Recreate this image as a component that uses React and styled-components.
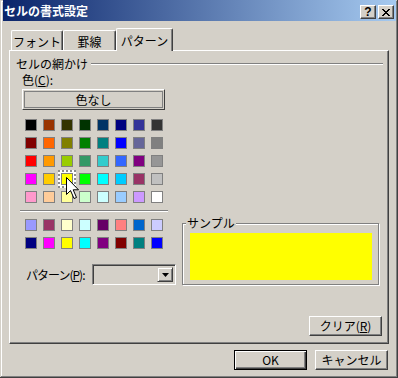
import React from "react";
import styled, { createGlobalStyle } from "styled-components";

const Global = createGlobalStyle`
  html, body { margin: 0; padding: 0; background: #d4d0c8; }
  body {
    font-family: "Noto Sans CJK JP", "Noto Sans", sans-serif;
    font-size: 12px;
    line-height: 14px;
    color: #000;
  }
  * { box-sizing: border-box; }
`;

const Window = styled.div`
  width: 398px;
  height: 378px;
  background: #d4d0c8;
  padding: 0 2px 2px 3px;
  box-shadow: inset -1px -1px #404040, inset 1px 1px #d4d0c8,
    inset -2px -2px #808080, inset 2px 2px #fff;
  display: flex;
  flex-direction: column;
`;

const TitleBar = styled.div`
  height: 21px;
  flex: none;
  display: flex;
  align-items: center;
  padding: 0 2px 0 1px;
  background: linear-gradient(to right, #0a246a, #a6caf0);
`;

const Title = styled.span`
  flex: 1;
  color: #fff;
  font-weight: bold;
  font-size: 12px;
  line-height: 14px;
  margin-top: 1px;
`;

const CaptionButton = styled.div`
  width: 16px;
  height: 14px;
  margin-top: 3px;
  margin-left: ${(p) => p.$gap || 0}px;
  background: #d4d0c8;
  border-top: 1px solid #fff;
  border-left: 1px solid #fff;
  border-right: 1px solid #404040;
  border-bottom: 1px solid #404040;
  box-shadow: inset -1px -1px #808080;
  display: flex;
  align-items: center;
  justify-content: center;
  font-family: "Liberation Sans", sans-serif;
  font-weight: bold;
  font-size: 12px;
  line-height: 12px;
`;

const Body = styled.div`
  flex: 1;
  display: flex;
  flex-direction: column;
  padding: 7px 7px 0 6px;
`;

const TabRow = styled.div`
  height: 22px;
  display: flex;
  align-items: flex-end;
  padding-left: 2px;
  position: relative;
  z-index: 1;
`;

const Tab = styled.div`
  width: ${(p) => p.$w}px;
  height: ${(p) => (p.$active ? 23 : 20)}px;
  margin-bottom: ${(p) => (p.$active ? -1 : 0)}px;
  background: #d4d0c8;
  border-top: 1px solid #fff;
  border-left: 1px solid #fff;
  border-right: 1px solid #404040;
  box-shadow: inset -1px 0 #808080;
  border-top-left-radius: 2px;
  border-top-right-radius: 2px;
  display: flex;
  align-items: center;
  justify-content: center;
  padding-top: ${(p) => (p.$active ? 1 : 2)}px;
`;

const Panel = styled.div`
  height: 294px;
  flex: none;
  border-top: 1px solid #fff;
  border-left: 1px solid #fff;
  border-right: 1px solid #404040;
  border-bottom: 1px solid #404040;
  box-shadow: inset -1px -1px #808080;
  display: flex;
  flex-direction: column;
  padding: 6px 5px 0 0;
`;

const GroupHeader = styled.div`
  display: flex;
  align-items: center;
  height: 14px;
  margin-left: 6px;
`;

const Rule = styled.div`
  flex: 1;
  height: 2px;
  margin-left: 3px;
  border-top: 1px solid #808080;
  border-bottom: 1px solid #fff;
`;

const Content = styled.div`
  display: flex;
`;

const LeftCol = styled.div`
  width: 172px;
  flex: none;
  display: flex;
  flex-direction: column;
`;

const RightCol = styled.div`
  flex: 1;
  display: flex;
  flex-direction: column;
  justify-content: flex-end;
`;

const FieldLabel = styled.div`
  margin: ${(p) => p.$mt || 0}px 0 0 ${(p) => p.$ml || 0}px;
  height: 14px;
`;

const NoneButton = styled.div`
  width: 143px;
  height: 21px;
  margin: 2px 0 0 12px;
  border-top: 1px solid #fff;
  border-left: 1px solid #fff;
  border-right: 1px solid #404040;
  border-bottom: 1px solid #404040;
  padding: 1px;
  display: flex;
`;

const NoneInner = styled.div`
  flex: 1;
  border: 1px solid #808080;
  display: flex;
  align-items: center;
  justify-content: center;
`;

const Palette = styled.div`
  position: relative;
  display: grid;
  grid-template-columns: repeat(8, 12px);
  grid-auto-rows: 12px;
  gap: 6px;
  margin: ${(p) => p.$mt}px 0 0 15px;
`;

const Swatch = styled.div`
  width: 12px;
  height: 12px;
  border: 1px solid #808080;
  background: ${(p) => p.$c};
  ${(p) =>
    p.$selected &&
    `box-shadow: 0 0 0 3px #fff; outline: 2px dotted #8c8c8c; outline-offset: 1px;`}
`;

const Cursor = styled.svg`
  position: absolute;
  left: 41px;
  top: 58px;
  width: 14px;
  height: 23px;
  overflow: visible;
`;

const Separator = styled.div`
  width: 148px;
  height: 2px;
  margin: 7px 0 0 10px;
  border-top: 1px solid #808080;
  border-bottom: 1px solid #fff;
`;

const PatternRow = styled.div`
  display: flex;
  align-items: center;
  margin: 15px 0 0 16px;
`;

const PatternLabel = styled.div`
  width: 66px;
  white-space: nowrap;
  letter-spacing: -1px;
`;

const Select = styled.div`
  width: 84px;
  height: 21px;
  border-top: 1px solid #808080;
  border-left: 1px solid #808080;
  border-right: 1px solid #fff;
  border-bottom: 1px solid #fff;
  box-shadow: inset 1px 1px #404040, inset -1px -1px #d4d0c8;
  display: flex;
  justify-content: flex-end;
  padding: 2px;
`;

const SelectArrow = styled.div`
  width: 16px;
  border-top: 1px solid #d4d0c8;
  border-left: 1px solid #d4d0c8;
  border-right: 1px solid #404040;
  border-bottom: 1px solid #404040;
  box-shadow: inset 1px 1px #fff, inset -1px -1px #808080;
  display: flex;
  align-items: center;
  justify-content: center;
`;

const Sample = styled.fieldset`
  width: 197px;
  margin: 0;
  padding: 3px 6px 4px 7px;
  min-width: 0;
  border: 1px solid #808080;
  box-shadow: inset 1px 1px #fff, 1px 1px 0 #fff;
`;

const Legend = styled.legend`
  padding: 0 1px;
  margin-left: -4px;
  background: #d4d0c8;
  line-height: 14px;
  height: 14px;
`;

const Preview = styled.div`
  width: 182px;
  height: 47px;
  background: #ffff00;
`;

const PanelFooter = styled.div`
  margin-top: auto;
  display: flex;
  justify-content: flex-end;
  padding: 0 1px 7px 0;
`;

const Button = styled.div`
  width: 73px;
  height: 20px;
  display: flex;
  align-items: center;
  justify-content: center;
  white-space: nowrap;
  ${(p) =>
    p.$default
      ? `border: 1px solid #000;
         box-shadow: inset 1px 1px #fff, inset -1px -1px #404040, inset -2px -2px #808080;`
      : `border-top: 1px solid #fff;
         border-left: 1px solid #fff;
         border-right: 1px solid #404040;
         border-bottom: 1px solid #404040;
         box-shadow: inset -1px -1px #808080;`}
`;

const DialogButtons = styled.div`
  display: flex;
  justify-content: flex-end;
  gap: 8px;
  margin-top: 6px;
  padding-right: 1px;
`;

const colors = [
  "#000000", "#993300", "#333300", "#003300", "#003366", "#000080", "#333399", "#333333",
  "#800000", "#ff6600", "#808000", "#008000", "#008080", "#0000ff", "#666699", "#808080",
  "#ff0000", "#ff9900", "#99cc00", "#339966", "#33cccc", "#3366ff", "#800080", "#969696",
  "#ff00ff", "#ffcc00", "#ffff00", "#00ff00", "#00ffff", "#00ccff", "#993366", "#c0c0c0",
  "#ff99cc", "#ffcc99", "#ffff99", "#ccffcc", "#ccffff", "#99ccff", "#cc99ff", "#ffffff",
];

const chartColors = [
  "#9999ff", "#993366", "#ffffcc", "#ccffff", "#660066", "#ff8080", "#0066cc", "#ccccff",
  "#000080", "#ff00ff", "#ffff00", "#00ffff", "#800080", "#800000", "#008080", "#0000ff",
];

export default function App() {
  return (
    <>
      <Global />
      <Window>
        <TitleBar>
          <Title>セルの書式設定</Title>
          <CaptionButton>?</CaptionButton>
          <CaptionButton $gap={2}>
            <svg width="8" height="7" viewBox="0 0 8 7">
              <path d="M0 0h2v1h1v1h2V1h1V0h2v1H7v1H6v1H5v1h1v1h1v1h1v1H6V6H5V5H3v1H2v1H0V6h1V5h1V4h1V3H2V2H1V1H0z" fill="#000" />
            </svg>
          </CaptionButton>
        </TitleBar>
        <Body>
          <TabRow>
            <Tab $w={52}>フォント</Tab>
            <Tab $w={53}>罫線</Tab>
            <Tab $w={57} $active>パターン</Tab>
          </TabRow>
          <Panel>
            <GroupHeader>
              <span>セルの網かけ</span>
              <Rule />
            </GroupHeader>
            <Content>
              <LeftCol>
                <FieldLabel $mt={2} $ml={12}>
                  色(<u>C</u>):
                </FieldLabel>
                <NoneButton>
                  <NoneInner>色なし</NoneInner>
                </NoneButton>
                <Palette $mt={9}>
                  {colors.map((c, i) => (
                    <Swatch key={i} $c={c} $selected={i === 26} />
                  ))}
                  <Cursor viewBox="0 0 14 23">
                    <polygon
                      points="0.5,0.5 0.5,17.5 4.5,13.5 8,21.5 10.5,20.5 7.2,12.8 12.5,12.8"
                      fill="#fff"
                      stroke="#000"
                      strokeWidth="1"
                    />
                  </Cursor>
                </Palette>
                <Separator />
                <Palette $mt={7}>
                  {chartColors.map((c, i) => (
                    <Swatch key={i} $c={c} />
                  ))}
                </Palette>
                <PatternRow>
                  <PatternLabel>
                    パターン(<u>P</u>):
                  </PatternLabel>
                  <Select>
                    <SelectArrow>
                      <svg width="7" height="4" viewBox="0 0 7 4">
                        <polygon points="0,0 7,0 3.5,4" fill="#000" />
                      </svg>
                    </SelectArrow>
                  </Select>
                </PatternRow>
              </LeftCol>
              <RightCol>
                <Sample>
                  <Legend>サンプル</Legend>
                  <Preview />
                </Sample>
              </RightCol>
            </Content>
            <PanelFooter>
              <Button>
                クリア(<u>R</u>)
              </Button>
            </PanelFooter>
          </Panel>
          <DialogButtons>
            <Button $default>OK</Button>
            <Button>キャンセル</Button>
          </DialogButtons>
        </Body>
      </Window>
    </>
  );
}
